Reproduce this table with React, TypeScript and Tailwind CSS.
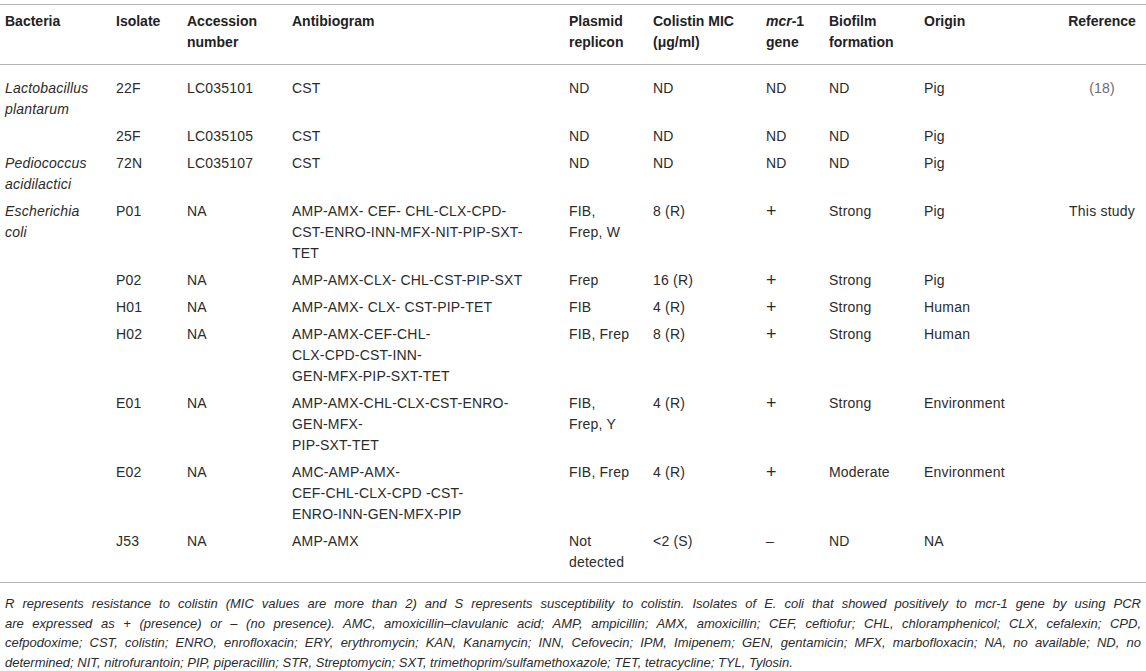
import React from "react";

type Row = {
  bac?: string[];
  iso: string;
  acc: string;
  anti: string[];
  plas: string[];
  mic: string;
  mcr: string;
  bio: string;
  origin: string;
  ref?: React.ReactNode;
};

const rows: Row[] = [
  { bac: ["Lactobacillus", "plantarum"], iso: "22F", acc: "LC035101", anti: ["CST"], plas: ["ND"], mic: "ND", mcr: "ND", bio: "ND", origin: "Pig", ref: <span className="text-[#6b6b6b]">(18)</span> },
  { iso: "25F", acc: "LC035105", anti: ["CST"], plas: ["ND"], mic: "ND", mcr: "ND", bio: "ND", origin: "Pig" },
  { bac: ["Pediococcus", "acidilactici"], iso: "72N", acc: "LC035107", anti: ["CST"], plas: ["ND"], mic: "ND", mcr: "ND", bio: "ND", origin: "Pig" },
  { bac: ["Escherichia", "coli"], iso: "P01", acc: "NA", anti: ["AMP-AMX- CEF- CHL-CLX-CPD-", "CST-ENRO-INN-MFX-NIT-PIP-SXT-", "TET"], plas: ["FIB,", "Frep, W"], mic: "8 (R)", mcr: "+", bio: "Strong", origin: "Pig", ref: "This study" },
  { iso: "P02", acc: "NA", anti: ["AMP-AMX-CLX- CHL-CST-PIP-SXT"], plas: ["Frep"], mic: "16 (R)", mcr: "+", bio: "Strong", origin: "Pig" },
  { iso: "H01", acc: "NA", anti: ["AMP-AMX- CLX- CST-PIP-TET"], plas: ["FIB"], mic: "4 (R)", mcr: "+", bio: "Strong", origin: "Human" },
  { iso: "H02", acc: "NA", anti: ["AMP-AMX-CEF-CHL-", "CLX-CPD-CST-INN-", "GEN-MFX-PIP-SXT-TET"], plas: ["FIB, Frep"], mic: "8 (R)", mcr: "+", bio: "Strong", origin: "Human" },
  { iso: "E01", acc: "NA", anti: ["AMP-AMX-CHL-CLX-CST-ENRO-", "GEN-MFX-", "PIP-SXT-TET"], plas: ["FIB,", "Frep, Y"], mic: "4 (R)", mcr: "+", bio: "Strong", origin: "Environment" },
  { iso: "E02", acc: "NA", anti: ["AMC-AMP-AMX-", "CEF-CHL-CLX-CPD -CST-", "ENRO-INN-GEN-MFX-PIP"], plas: ["FIB, Frep"], mic: "4 (R)", mcr: "+", bio: "Moderate", origin: "Environment" },
  { iso: "J53", acc: "NA", anti: ["AMP-AMX"], plas: ["Not", "detected"], mic: "<2 (S)", mcr: "–", bio: "ND", origin: "NA" },
];

const grid =
  "grid grid-cols-[111px_71px_105px_277px_84px_113px_63px_95px_139px_88px]";

function Lines({ lines }: { lines: string[] }) {
  return (
    <>
      {lines.map((l, i) => (
        <div key={i} className="whitespace-nowrap">
          {l}
        </div>
      ))}
    </>
  );
}

const foot = [
  "R represents resistance to colistin (MIC values are more than 2) and S represents susceptibility to colistin. Isolates of E. coli that showed positively to mcr-1 gene by using PCR",
  "are expressed as + (presence) or – (no presence). AMC, amoxicillin–clavulanic acid; AMP, ampicillin; AMX, amoxicillin; CEF, ceftiofur; CHL, chloramphenicol; CLX, cefalexin; CPD,",
  "cefpodoxime; CST, colistin; ENRO, enrofloxacin; ERY, erythromycin; KAN, Kanamycin; INN, Cefovecin; IPM, Imipenem; GEN, gentamicin; MFX, marbofloxacin; NA, no available; ND, no",
  "determined; NIT, nitrofurantoin; PIP, piperacillin; STR, Streptomycin; SXT, trimethoprim/sulfamethoxazole; TET, tetracycline; TYL, Tylosin.",
];

export default function App() {
  return (
    <div
      className="w-[1146px] h-[671px] overflow-hidden bg-white text-[#2b2b2b] pt-[4px]"
      style={{ fontFamily: '"Liberation Sans", Arial, sans-serif' }}
    >
      <div className="border-t-[1.5px] border-[#b4b4b4]">
        {/* header */}
        <div
          className={`${grid} pt-[6px] pb-[11px] border-b-[1.5px] border-[#b4b4b4] text-[14px] leading-[21px] font-bold text-[#222]`}
        >
          <div className="pl-[5px]">Bacteria</div>
          <div className="pl-[5px]">Isolate</div>
          <div className="pl-[5px]">
            Accession
            <br />
            number
          </div>
          <div className="pl-[5px]">Antibiogram</div>
          <div className="pl-[5px]">
            Plasmid
            <br />
            replicon
          </div>
          <div className="pl-[5px]">
            Colistin MIC
            <br />
            (μg/ml)
          </div>
          <div className="pl-[5px]">
            <i>mcr</i>-1
            <br />
            gene
          </div>
          <div className="pl-[5px]">
            Biofilm
            <br />
            formation
          </div>
          <div className="pl-[5px]">Origin</div>
          <div className="text-center">Reference</div>
        </div>
        {/* body */}
        <div className="pt-[10px] pb-[6px] border-b-[1.5px] border-[#b4b4b4] text-[14px] leading-[21px] tracking-[0.2px]">
          {rows.map((r, i) => (
            <div key={i} className={`${grid} py-[3px]`}>
              <div className="pl-[5px] italic">{r.bac ? <Lines lines={r.bac} /> : null}</div>
              <div className="pl-[5px]">{r.iso}</div>
              <div className="pl-[5px]">{r.acc}</div>
              <div className="pl-[5px]">
                <Lines lines={r.anti} />
              </div>
              <div className="pl-[5px]">
                <Lines lines={r.plas} />
              </div>
              <div className="pl-[5px]">{r.mic}</div>
              {r.mcr === "+" ? (
                <div className="pl-[5px] text-[18px] leading-[21px] font-light">+</div>
              ) : (
                <div className="pl-[5px]">{r.mcr}</div>
              )}
              <div className="pl-[5px]">{r.bio}</div>
              <div className="pl-[5px]">{r.origin}</div>
              <div className="text-center whitespace-nowrap">{r.ref}</div>
            </div>
          ))}
        </div>
        {/* footnote */}
        <div className="px-[5px] pt-[11px] text-[13px] leading-[19.5px] italic text-[#2b2b2b]">
          {foot.map((l, i) => (
            <div
              key={i}
              className={i < foot.length - 1 ? "whitespace-nowrap [text-align-last:justify] text-justify" : "whitespace-nowrap"}
            >
              {l}
            </div>
          ))}
        </div>
      </div>
    </div>
  );
}
